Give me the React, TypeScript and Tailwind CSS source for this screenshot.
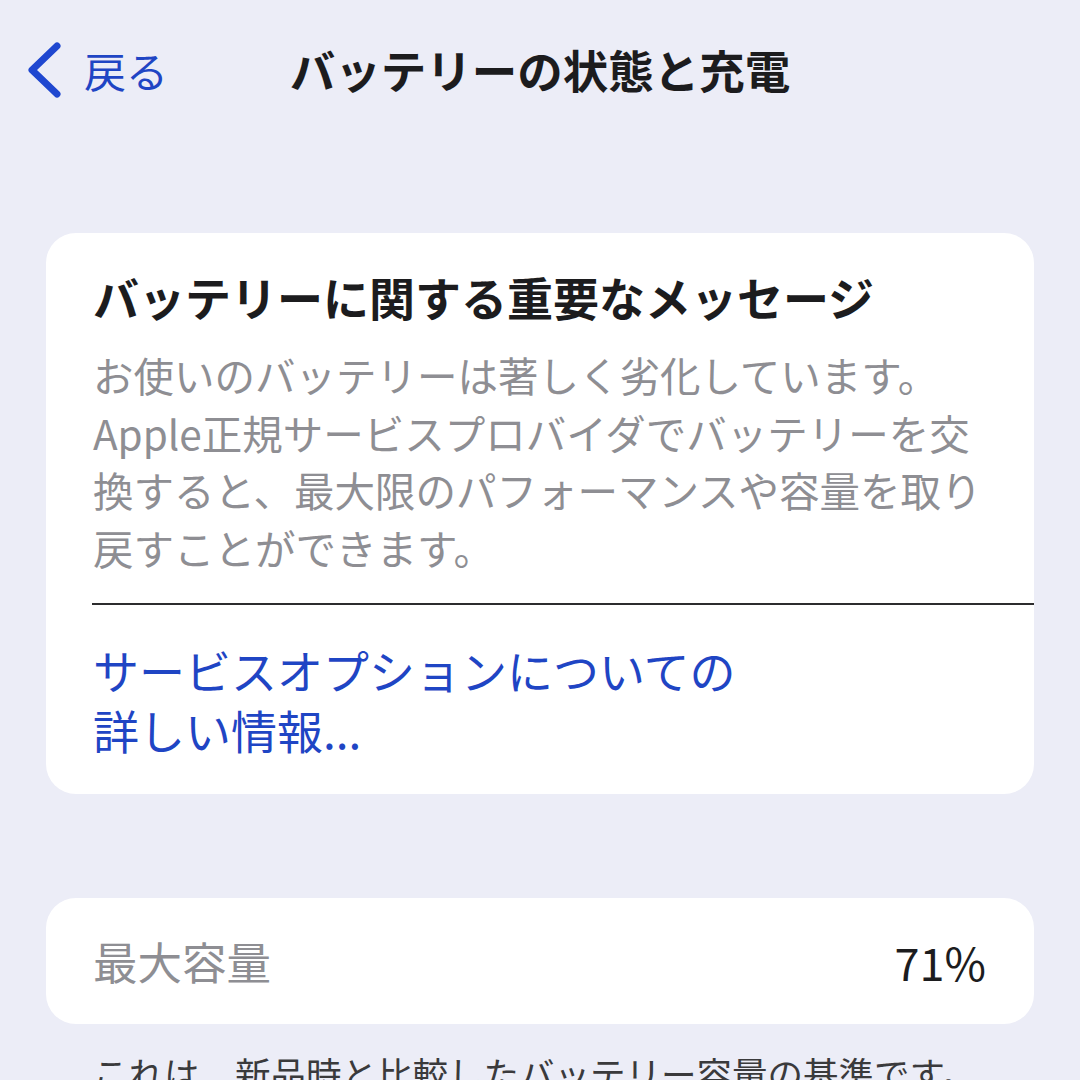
import React from "react";

const font = { fontFamily: '"Noto Sans CJK JP", "Noto Sans", sans-serif' };

export default function App() {
  return (
    <div
      className="w-[1080px] h-[1080px] overflow-hidden bg-[#ecedf7] flex flex-col"
      style={font}
    >
      {/* Nav bar */}
      <div className="grid grid-cols-[1fr_auto_1fr] items-center h-[80px] mt-[30px] shrink-0">
        <div className="flex items-center pl-[26px] gap-[22px] text-[#1f45c4]">
          <svg width="36" height="56" viewBox="0 0 36 56" fill="none">
            <path
              d="M31 4 L6 28 L31 52"
              stroke="#1f47d0"
              strokeWidth="7"
              strokeLinecap="round"
              strokeLinejoin="round"
            />
          </svg>
          <span className="text-[42px] leading-none">戻る</span>
        </div>
        <div className="text-[45.5px] font-bold leading-none text-[#1c1c1e]">
          バッテリーの状態と充電
        </div>
        <div />
      </div>

      {/* Card 1 */}
      <div className="mx-[46px] mt-[123px] shrink-0 bg-white rounded-[30px] pt-[36px] pb-[35px]">
        <div className="pl-[47px] text-[46px] font-bold leading-[54px] text-[#1c1c1e]">
          バッテリーに関する重要なメッセージ
        </div>
        <div className="pl-[47px] pr-[30px] mt-[23px] text-[40.5px] leading-[57.5px] text-[#8e8e93] whitespace-nowrap">
          お使いのバッテリーは著しく劣化しています。
          <br />
          Apple正規サービスプロバイダでバッテリーを交
          <br />
          換すると、最大限のパフォーマンスや容量を取り
          <br />
          戻すことができます。
        </div>
        <div className="ml-[46px] mt-[27px] h-[2px] bg-[#2c2c2e]" />
        <div className="pl-[47px] mt-[34px] text-[46px] leading-[60px] text-[#1f45c4]">
          サービスオプションについての
          <br />
          詳しい情報...
        </div>
      </div>

      {/* Card 2 */}
      <div className="mx-[46px] mt-[104px] h-[126px] shrink-0 bg-white rounded-[30px] flex items-center justify-between pl-[47px] pr-[48px]">
        <span className="text-[44.5px] leading-none text-[#8e8e93]">最大容量</span>
        <span className="text-[45px] leading-none text-[#1c1c1e]">71%</span>
      </div>

      <div className="pl-[93px] mt-[27px] text-[35.5px] leading-[44px] text-[#3a3a3c] whitespace-nowrap shrink-0">
        これは、新品時と比較したバッテリー容量の基準です。
      </div>
    </div>
  );
}
